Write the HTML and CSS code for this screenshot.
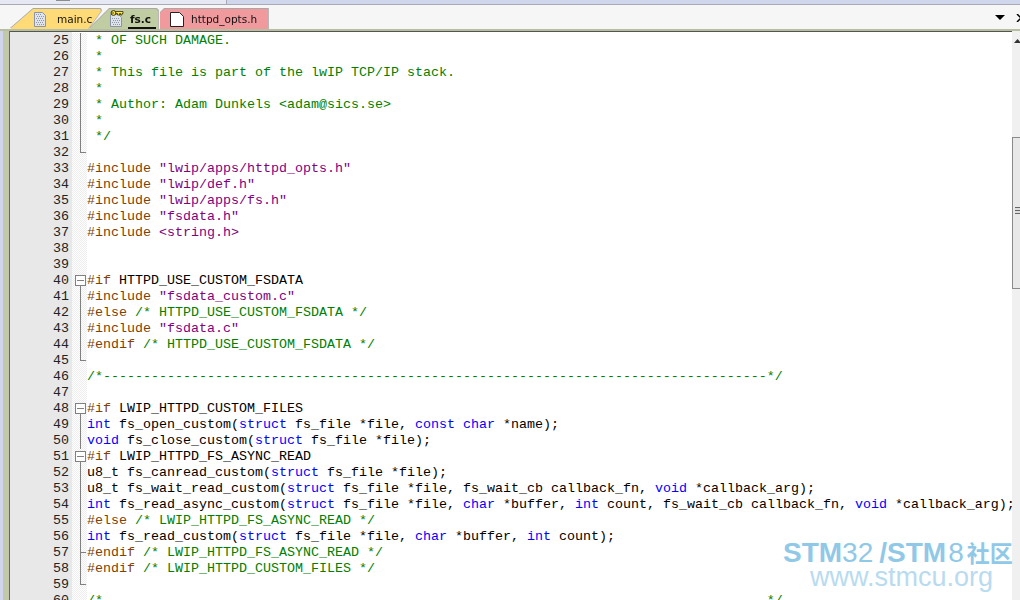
FILE: index.html
```html
<!DOCTYPE html>
<html lang="en">
<head>
    <meta charset="UTF-8">
    <title>fs.c</title>
    <link rel="stylesheet" href="styles.css">
</head>
<body>
    <div class="top-strip"><div class="top-panel"><span class="top-knob"></span></div></div>

    <div class="tab-bar">
        <div class="tabs">
            <div class="tab tab-main">
                <svg class="doc-icon" width="12" height="15" viewBox="0 0 12 15"><path d="M.5.5h8l3 3v11H.5z" fill="#dfe3ea" stroke="#8a93a8"/><path d="M2 2h1v1H2zM4 2h1v1H4zM6 2h1v1H6zM3 4h1v1H3zM5 4h1v1H5zM7 4h1v1H7zM9 4h1v1H9zM2 6h1v1H2zM4 6h1v1H4zM6 6h1v1H6zM8 6h1v1H8zM3 8h1v1H3zM5 8h1v1H5zM7 8h1v1H7zM9 8h1v1H9zM2 10h1v1H2zM4 10h1v1H4zM6 10h1v1H6zM8 10h1v1H8zM3 12h1v1H3zM5 12h1v1H5zM7 12h1v1H7zM9 12h1v1H9z" fill="#8f96a6"/></svg>
                <span>main.c</span>
            </div>
            <div class="tab tab-fs">
                <svg class="doc-icon" width="14" height="17" viewBox="0 0 14 17"><path d="M.5 4.500h8l3 3v9H.5z" fill="#dfe3ea" stroke="#8a93a8"/><path d="M2 8h1v1H2zM4 8h1v1H4zM6 8h1v1H6zM8 8h1v1H8zM3 10h1v1H3zM5 10h1v1H5zM7 10h1v1H7zM9 10h1v1H9zM2 12h1v1H2zM4 12h1v1H4zM6 12h1v1H6zM8 12h1v1H8zM3 14h1v1H3zM5 14h1v1H5zM7 14h1v1H7zM9 14h1v1H9z" fill="#8f96a6"/><path d="M5.500 1.500h7.500v2h-1v1.500h-1.500v-1.500h-1v1.500H7.500v-1.500h-2z" fill="#ffe94a" stroke="#3a3000" stroke-width=".8"/><circle cx="3.500" cy="3" r="2.400" fill="#ffe94a" stroke="#3a3000"/><circle cx="3" cy="3" r=".8" fill="#3a3000"/></svg>
                <span class="tab-current">fs.c</span>
            </div>
            <div class="tab tab-opts">
                <svg class="doc-icon" width="14" height="15" viewBox="0 0 14 15"><path d="M.5.5h9l4 4v10H.5z" fill="#fff" stroke="#222"/></svg>
                <span>httpd_opts.h</span>
            </div>
        </div>
        <svg class="tab-menu" width="10" height="5" viewBox="0 0 10 5"><path d="M0 0h10L5 5z" fill="#000"/></svg>
        <svg class="tab-close" width="8" height="8" viewBox="0 0 8 8"><path d="M1 0l3 3 3-3M1 8l3-3 3 3" fill="none" stroke="#000" stroke-width="1.500"/></svg>
    </div>

    <div class="editor">
        <div class="edge"></div>
        <div class="lines">
            <div class="line"><span class="num">25</span><span class="fold fold-bar"></span><code> <i class="c">* OF SUCH DAMAGE.</i></code></div>
            <div class="line"><span class="num">26</span><span class="fold fold-bar"></span><code> <i class="c">*</i></code></div>
            <div class="line"><span class="num">27</span><span class="fold fold-bar"></span><code> <i class="c">* This file is part of the lwIP TCP/IP stack.</i></code></div>
            <div class="line"><span class="num">28</span><span class="fold fold-bar"></span><code> <i class="c">*</i></code></div>
            <div class="line"><span class="num">29</span><span class="fold fold-bar"></span><code> <i class="c">* Author: Adam Dunkels &lt;adam@sics.se&gt;</i></code></div>
            <div class="line"><span class="num">30</span><span class="fold fold-bar"></span><code> <i class="c">*</i></code></div>
            <div class="line"><span class="num">31</span><span class="fold fold-bar"></span><code> <i class="c">*/</i></code></div>
            <div class="line"><span class="num">32</span><span class="fold fold-end"></span><code></code></div>
            <div class="line"><span class="num">33</span><span class="fold"></span><code><i class="p">#include</i> <i class="s">"lwip/apps/httpd_opts.h"</i></code></div>
            <div class="line"><span class="num">34</span><span class="fold"></span><code><i class="p">#include</i> <i class="s">"lwip/def.h"</i></code></div>
            <div class="line"><span class="num">35</span><span class="fold"></span><code><i class="p">#include</i> <i class="s">"lwip/apps/fs.h"</i></code></div>
            <div class="line"><span class="num">36</span><span class="fold"></span><code><i class="p">#include</i> <i class="s">"fsdata.h"</i></code></div>
            <div class="line"><span class="num">37</span><span class="fold"></span><code><i class="p">#include</i> <i class="s">&lt;string.h&gt;</i></code></div>
            <div class="line"><span class="num">38</span><span class="fold"></span><code></code></div>
            <div class="line"><span class="num">39</span><span class="fold"></span><code></code></div>
            <div class="line"><span class="num">40</span><span class="fold fold-open"></span><code><i class="p">#if</i> HTTPD_USE_CUSTOM_FSDATA</code></div>
            <div class="line"><span class="num">41</span><span class="fold fold-bar"></span><code><i class="p">#include</i> <i class="s">"fsdata_custom.c"</i></code></div>
            <div class="line"><span class="num">42</span><span class="fold fold-bar"></span><code><i class="p">#else</i> <i class="c">/* HTTPD_USE_CUSTOM_FSDATA */</i></code></div>
            <div class="line"><span class="num">43</span><span class="fold fold-bar"></span><code><i class="p">#include</i> <i class="s">"fsdata.c"</i></code></div>
            <div class="line"><span class="num">44</span><span class="fold fold-bar"></span><code><i class="p">#endif</i> <i class="c">/* HTTPD_USE_CUSTOM_FSDATA */</i></code></div>
            <div class="line"><span class="num">45</span><span class="fold fold-end"></span><code></code></div>
            <div class="line"><span class="num">46</span><span class="fold"></span><code><i class="c">/*-----------------------------------------------------------------------------------*/</i></code></div>
            <div class="line"><span class="num">47</span><span class="fold"></span><code></code></div>
            <div class="line"><span class="num">48</span><span class="fold fold-open"></span><code><i class="p">#if</i> LWIP_HTTPD_CUSTOM_FILES</code></div>
            <div class="line"><span class="num">49</span><span class="fold fold-bar"></span><code><i class="k">int</i> fs_open_custom(<i class="k">struct</i> fs_file *file, <i class="k">const</i> <i class="k">char</i> *name);</code></div>
            <div class="line"><span class="num">50</span><span class="fold fold-bar"></span><code><i class="k">void</i> fs_close_custom(<i class="k">struct</i> fs_file *file);</code></div>
            <div class="line"><span class="num">51</span><span class="fold fold-open"></span><code><i class="p">#if</i> LWIP_HTTPD_FS_ASYNC_READ</code></div>
            <div class="line"><span class="num">52</span><span class="fold fold-bar"></span><code>u8_t fs_canread_custom(<i class="k">struct</i> fs_file *file);</code></div>
            <div class="line"><span class="num">53</span><span class="fold fold-bar"></span><code>u8_t fs_wait_read_custom(<i class="k">struct</i> fs_file *file, fs_wait_cb callback_fn, <i class="k">void</i> *callback_arg);</code></div>
            <div class="line"><span class="num">54</span><span class="fold fold-bar"></span><code><i class="k">int</i> fs_read_async_custom(<i class="k">struct</i> fs_file *file, <i class="k">char</i> *buffer, <i class="k">int</i> count, fs_wait_cb callback_fn, <i class="k">void</i> *callback_arg);</code></div>
            <div class="line"><span class="num">55</span><span class="fold fold-bar"></span><code><i class="p">#else</i> <i class="c">/* LWIP_HTTPD_FS_ASYNC_READ */</i></code></div>
            <div class="line"><span class="num">56</span><span class="fold fold-bar"></span><code><i class="k">int</i> fs_read_custom(<i class="k">struct</i> fs_file *file, <i class="k">char</i> *buffer, <i class="k">int</i> count);</code></div>
            <div class="line"><span class="num">57</span><span class="fold fold-tee"></span><code><i class="p">#endif</i> <i class="c">/* LWIP_HTTPD_FS_ASYNC_READ */</i></code></div>
            <div class="line"><span class="num">58</span><span class="fold fold-bar"></span><code><i class="p">#endif</i> <i class="c">/* LWIP_HTTPD_CUSTOM_FILES */</i></code></div>
            <div class="line"><span class="num">59</span><span class="fold fold-end"></span><code></code></div>
            <div class="line"><span class="num">60</span><span class="fold"></span><code><i class="c">/*-----------------------------------------------------------------------------------*/</i></code></div>
        </div>
        <div class="scrollbar">
            <svg class="scroll-up" width="7" height="4" viewBox="0 0 7 4"><path d="M0 4L3.500 0 7 4z" fill="#333"/></svg>
            <div class="scroll-thumb"><span class="scroll-grip"></span></div>
        </div>
    </div>

    <div class="watermark">
        <p class="wm-title"><b>STM</b>32<b class="wm-slash">/STM</b><span class="wm-eight">8</span><b class="wm-cjk">社区</b></p>
        <p class="wm-url">www.stmcu.org</p>
    </div>
</body>
</html>
```
FILE: styles.css
```css
html, body {
    margin: 0;
    height: 600px;
    overflow: hidden;
}

body {
    background-color: #f6f6f6;
    position: relative;
}

/* strip left over from the window above */
.top-strip {
    height: 4px;
    background-color: #d0d6ec;
    border-bottom: 1px solid #a9a9b4;
}

.top-panel {
    width: 226px;
    height: 4px;
    background-color: #e6e8f4;
    border-right: 1px solid #a9a9b4;
}

.top-knob {
    display: block;
    width: 14px;
    height: 1px;
    margin-left: 56px;
    background-color: #8c8c8c;
}

/* tabs */
.tab-bar {
    height: 24px;
    padding-left: 10px;
    display: flex;
    align-items: flex-end;
    background-color: #f6f6f6;
}

.tabs {
    display: flex;
    height: 22px;
    filter: drop-shadow(0 -1px 0 #a8a8a8) drop-shadow(1px 0 0 #b8b8b8);
}

.tab {
    height: 20px;
    margin-top: 2px;
    display: flex;
    align-items: center;
    font-family: "DejaVu Sans", sans-serif;
    font-size: 10.5px;
    color: #111;
}

.tab-main {
    width: 91px;
    padding-left: 24px;
    box-sizing: border-box;
    gap: 11px;
    background-color: #ffdb78;
    clip-path: polygon(0 100%, 23px 0, 90px 0, 91px 2px, 78px 100%);
}

.tab-fs {
    width: 69px;
    margin-left: -12px;
    padding-left: 21px;
    box-sizing: border-box;
    gap: 4px;
    background-color: #c0cca2;
    clip-path: polygon(0 100%, 20px 0, 67px 0, 69px 2px, 69px 100%);
}

.tab-opts {
    width: 108px;
    margin-left: 2px;
    padding-left: 10px;
    box-sizing: border-box;
    gap: 7px;
    background-color: #f09a9e;
    clip-path: polygon(0 4px, 4px 0, 108px 0, 108px 100%, 0 100%);
}

.tab-current {
    font-weight: bold;
    line-height: 13px;
    border-bottom: 2px solid #111;
    padding: 0 5px 1px 2px;
    margin-top: 3px;
}

.tab-fs .doc-icon {
    margin-top: -2px;
}

.tab-menu {
    margin-left: auto;
    margin-bottom: 9px;
}

.tab-close {
    margin-left: 11px;
    margin-right: -4px;
    margin-bottom: 7px;
}

/* editor */
.editor {
    height: 571px;
    display: flex;
    border-top: 2px solid #b8bea0;
    overflow: hidden;
}

.edge {
    width: 6px;
    margin-left: 3px;
    background-color: #c2c8aa;
    border-right: 1px solid #666;
    box-shadow: -3px 0 0 #cfd5ec;
    flex: none;
}

.lines {
    flex: 1;
    min-width: 0;
    overflow: hidden;
    padding-top: 2px;
    background: linear-gradient(90deg, #e8e8e8 62px, #fff 62px);
    box-shadow: inset 0 1px 0 #555;
}

.line {
    display: flex;
    height: 16px;
    font-family: "Liberation Mono", monospace;
    font-size: 13.33px;
    line-height: 16px;
    white-space: pre;
}

.num {
    width: 59px;
    padding-right: 3px;
    text-align: right;
    color: #222;
    background-color: #e8e8e8;
    flex: none;
}

.fold {
    width: 15px;
    position: relative;
    background-color: #fff;
    background-image: conic-gradient(#ededed 25%, #fff 0 50%, #ededed 0 75%, #fff 0);
    background-size: 2px 2px;
    flex: none;
}

.line code {
    font: inherit;
    color: #000;
}

.line i {
    font-style: normal;
}

.c { color: #008000; }
.p { color: #804000; }
.s { color: #800080; }
.k { color: #0000ff; }

/* fold marks */
.fold-bar::before,
.fold-tee::before,
.fold-end::before {
    content: "";
    position: absolute;
    left: 8px;
    top: 0;
    bottom: 0;
    border-left: 1px solid #808080;
}

.fold-end::before {
    bottom: 8px;
}

.fold-end::after,
.fold-tee::after {
    content: "";
    position: absolute;
    left: 8px;
    top: 7px;
    width: 6px;
    border-top: 1px solid #808080;
}

.fold-open::before {
    content: "";
    position: absolute;
    left: 3px;
    top: 2px;
    width: 9px;
    height: 9px;
    border: 1px solid #808080;
    background: linear-gradient(#808080, #808080) center / 7px 1px no-repeat #fff;
}

.fold-open::after {
    content: "";
    position: absolute;
    left: 8px;
    top: 13px;
    bottom: 0;
    border-left: 1px solid #808080;
}

/* scrollbar */
.scrollbar {
    width: 8px;
    position: relative;
    background-color: #f0f0f0;
    flex: none;
}

.scroll-up {
    position: absolute;
    left: 2px;
    top: 8px;
}

.scroll-thumb {
    position: absolute;
    left: 0;
    right: -6px;
    top: 106px;
    height: 152px;
    box-sizing: border-box;
    background-color: #e8e8e8;
    border: 1px solid #8a8a8a;
    border-right: none;
}

.scroll-grip {
    position: absolute;
    left: 2px;
    top: 69px;
    width: 6px;
    height: 7px;
    background: repeating-linear-gradient(#666 0 1px, #ddd 1px 3px);
}

/* site watermark, sits over the code */
.watermark {
    position: absolute;
    left: 783px;
    top: 540px;
    width: 236px;
    font-family: "Liberation Sans", Arial, sans-serif;
    color: #90c8e8;
}

.wm-title {
    margin: 0;
    font-size: 28px;
    line-height: 25px;
    height: 25px;
    white-space: nowrap;
}

.wm-slash {
    margin-left: 6px;
}

.wm-eight {
    margin-left: 2px;
}

.wm-cjk {
    font-family: "Noto Sans CJK SC", sans-serif;
    font-size: 23px;
    line-height: 25px;
    margin-left: 3px;
}

.wm-url {
    margin: 0 0 0 27px;
    font-size: 27px;
    line-height: 24px;
    color: #b8dbf0;
    white-space: nowrap;
}
```
